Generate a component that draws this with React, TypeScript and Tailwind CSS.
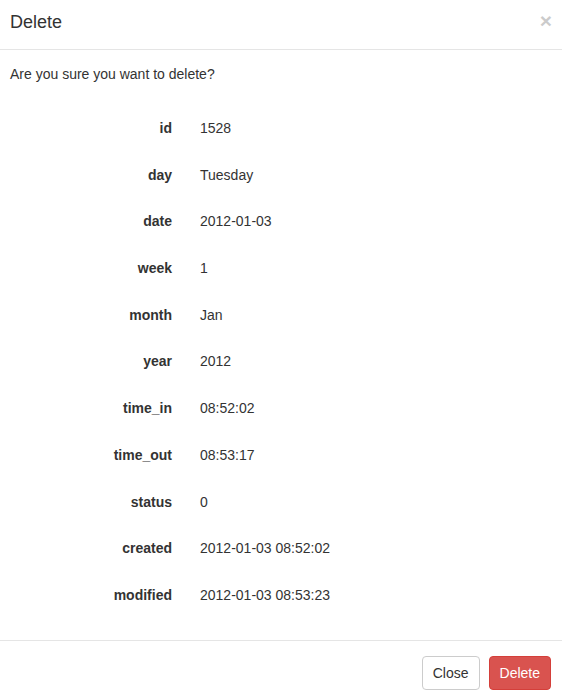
const rows: [string, string][] = [
  ["id", "1528"],
  ["day", "Tuesday"],
  ["date", "2012-01-03"],
  ["week", "1"],
  ["month", "Jan"],
  ["year", "2012"],
  ["time_in", "08:52:02"],
  ["time_out", "08:53:17"],
  ["status", "0"],
  ["created", "2012-01-03 08:52:02"],
  ["modified", "2012-01-03 08:53:23"],
];

export default function App() {
  return (
    <div className="min-h-[700px] bg-white text-[14px] leading-[20px] text-[#333] font-['Liberation_Sans',Arial,sans-serif]">
      {/* header */}
      <div className="flex items-start justify-between border-b border-[#e5e5e5] pl-[10px] pr-[10px] pt-[9px] h-[50px]">
        <h4 className="text-[18px] leading-[26px] font-normal">Delete</h4>
        <button className="text-[21px] font-bold leading-none text-black opacity-20 mt-[1px]">×</button>
      </div>

      {/* body */}
      <div className="h-[590px] px-[10px] pt-[14px]">
        <p>Are you sure you want to delete?</p>
        <dl className="mt-[34px] grid grid-cols-[162px_1fr] gap-x-[28px] gap-y-[26.7px]">
          {rows.map(([k, v]) => (
            <div key={k} className="contents">
              <dt className="text-right font-bold">{k}</dt>
              <dd>{v}</dd>
            </div>
          ))}
        </dl>
      </div>

      {/* footer */}
      <div className="flex justify-end gap-[9px] border-t border-[#e5e5e5] px-[11px] pt-[15px] pb-[15px]">
        <button className="h-[34px] rounded-[4px] border border-[#ccc] bg-white px-[10px] text-[#333]">Close</button>
        <button className="h-[34px] rounded-[4px] border border-[#d43f3a] bg-[#d9534f] px-[10px] text-white">Delete</button>
      </div>
    </div>
  );
}
